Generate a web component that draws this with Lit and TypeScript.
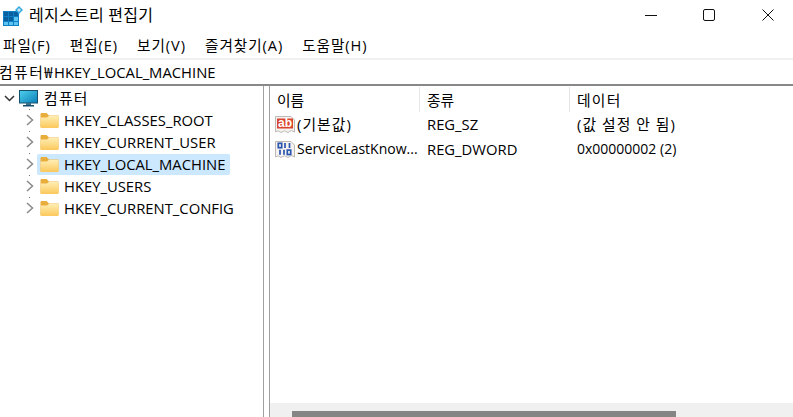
import { LitElement, html, css, svg } from "lit";
import { customElement } from "lit/decorators.js";

const folder = html`<svg class="ficon" width="19" height="15" viewBox="0 0 19 15">
  <defs><linearGradient id="fg" x1="0" y1="0" x2="0" y2="1"><stop offset="0" stop-color="#ffeeb5"/><stop offset="1" stop-color="#fbc85a"/></linearGradient></defs>
  <path d="M0.5 1 Q0.5 0 1.5 0 H6.5 L9 2.5 H18.5 V14 H0.5 Z" fill="#e9ad3c"/>
  <path d="M0.5 4.5 H7 L9 2.8 H18.5 V14.2 Q18.5 15 17.7 15 H1.3 Q0.5 15 0.5 14.2 Z" fill="url(#fg)"/>
</svg>`;

const chevR = html`<svg class="chev" width="8" height="12" viewBox="0 0 8 12"><path d="M1 1 L6.5 6 L1 11" fill="none" stroke="#8a8a8a" stroke-width="1.5"/></svg>`;

const keys = ["HKEY_CLASSES_ROOT", "HKEY_CURRENT_USER", "HKEY_LOCAL_MACHINE", "HKEY_USERS", "HKEY_CURRENT_CONFIG"];

const page = (inner: unknown) => svg`
  <path d="M0.5 1.5 H16 L19.5 5 V17 L16.5 15.5 L13 17.5 L9.5 15.8 L6 17.5 L3 15.8 L0.5 17 Z" fill="#f5f2ef" stroke="#bdb9b6" stroke-width="1"/>
  ${inner}`;

@customElement("app-root")
export class AppRoot extends LitElement {
  static styles = css`
    :host {
      display: flex;
      flex-direction: column;
      width: 793px;
      height: 417px;
      overflow: hidden;
      background: #fff;
      color: #000;
      font-family: "Open Sans", "Noto Sans CJK KR", sans-serif;
      font-size: 14.8px;
      line-height: 20px;
    }
    .title {
      height: 32px;
      display: flex;
      align-items: center;
      flex: none;
    }
    .app-icon { margin-left: 3px; margin-right: 6px; flex: none; }
    .title-text { flex: 1; font-size: 16px; letter-spacing: 0.25px; padding-bottom: 2px; }
    .wbtns { display: flex; margin-right: -4px; }
    .wbtn { width: 58.5px; height: 32px; display: flex; align-items: center; justify-content: center; padding-bottom: 2px; box-sizing: border-box; }
    .menu {
      height: 26px;
      flex: none;
      display: flex;
      align-items: center;
      padding-left: 3px;
      gap: 19px;
      font-size: 14.6px;
      letter-spacing: 0.95px;
      white-space: nowrap;
    }
    .addr {
      height: 24px;
      flex: none;
      border-top: 2px solid #f0f0f0;
      border-bottom: 2px solid #888;
      display: flex;
      align-items: center;
      font-size: 14.8px;
      white-space: nowrap;
    }
    .addr .crumb { letter-spacing: 1.5px; margin-left: -1px; }
    .body { flex: 1; display: flex; min-height: 0; }
    .tree { width: 263px; flex: none; padding-top: 1px; }
    .row { position: relative; height: 22px; display: flex; align-items: center; white-space: nowrap; }
    .root { padding-left: 4px; }
    .root .down { margin-right: 4px; flex: none; }
    .root .pc { margin-right: 6px; flex: none; }
    .root .label { letter-spacing: 1.3px; }
    .child { padding-left: 26px; }
    .child::before {
      content: "";
      position: absolute;
      left: 29px;
      top: 0;
      width: 1px;
      height: 1px;
      background: #777;
    }
    .chev { flex: none; margin-right: 3px; }
    .item {
      display: flex;
      align-items: center;
      height: 21px;
      padding: 0 3px 0 3px;
      border-radius: 2px;
    }
    .item.sel { background: #cce8ff; padding-right: 5px; }
    .ficon { flex: none; margin-right: 5px; }
    .split {
      width: 7px;
      flex: none;
      border-left: 1px solid #a0a0a0;
      border-right: 1px solid #a0a0a0;
      box-sizing: border-box;
    }
    .list { flex: 1; min-width: 0; display: flex; flex-direction: column; }
    .rows { flex: 1; }
    .grid { display: grid; grid-template-columns: 150px 150px 1fr; }
    .head { height: 25px; align-items: start; }
    .head div { height: 25px; display: flex; align-items: center; padding-left: 7px; border-right: 1px solid #e5e5e5; box-sizing: border-box; margin-top: 1px; }
    .head div:last-child { border-right: none; }
    .head .wide { letter-spacing: 1.2px; }
    .line { height: 25px; align-items: center; white-space: nowrap; }
    .line div { padding-left: 7px; }
    .line .name { display: flex; align-items: center; padding-left: 5px; gap: 2px; }
    .narrow { font-size: 14px; }
    .ko { letter-spacing: 1.05px; }
    .hbar { height: 14px; flex: none; background: #f0f0f0; display: flex; align-items: flex-end; padding-left: 22px; }
    .thumb { width: 384px; height: 6px; background: #858585; }
  `;

  render() {
    return html`
      <div class="title">
        <svg class="app-icon" width="20" height="20" viewBox="0 0 20 20">
          <rect x="0" y="5" width="16" height="15" fill="#0f7fc4"/>
          <g fill="#5cc4f0">
            <rect x="11" y="11" width="4" height="4"/><rect x="1" y="16" width="4" height="3"/>
            <rect x="6" y="16" width="4" height="3"/><rect x="11" y="16" width="4" height="3"/>
          </g>
          <g fill="#0a5f9e">
            <rect x="1" y="6" width="4" height="4"/><rect x="6" y="6" width="4" height="4"/>
            <rect x="1" y="11" width="4" height="4"/><rect x="6" y="11" width="4" height="4"/>
            <rect x="11" y="6" width="4" height="4"/>
          </g>
          <path d="M16 0 L20 4 L16 8 L12 4 Z" fill="#36a9e1"/>
          <path d="M16 2 L18 4 L16 6 L14 4 Z" fill="#bfe6f8"/>
        </svg>
        <div class="title-text">레지스트리 편집기</div>
        <div class="wbtns">
          <div class="wbtn"><svg width="12" height="12" viewBox="0 0 12 12"><path d="M0 6.5 H12" stroke="#111" stroke-width="1"/></svg></div>
          <div class="wbtn"><svg width="12" height="12" viewBox="0 0 12 12"><rect x="0.5" y="0.5" width="11" height="11" rx="1.5" fill="none" stroke="#111"/></svg></div>
          <div class="wbtn"><svg width="12" height="12" viewBox="0 0 12 12"><path d="M0.5 0.5 L11.5 11.5 M11.5 0.5 L0.5 11.5" stroke="#111" stroke-width="1"/></svg></div>
        </div>
      </div>
      <div class="menu">
        <span>파일(F)</span><span>편집(E)</span><span>보기(V)</span><span>즐겨찾기(A)</span><span>도움말(H)</span>
      </div>
      <div class="addr"><span class="crumb">컴퓨터₩</span><span>HKEY_LOCAL_MACHINE</span></div>
      <div class="body">
        <div class="tree">
          <div class="row root">
            <svg class="down" width="11" height="7" viewBox="0 0 11 7"><path d="M1 1 L5.5 5.5 L10 1" fill="none" stroke="#333" stroke-width="1.5"/></svg>
            <svg class="pc" width="19" height="17" viewBox="0 0 19 17">
              <defs><linearGradient id="sc" x1="0" y1="0" x2="1" y2="1"><stop offset="0" stop-color="#4fd0ec"/><stop offset="1" stop-color="#0b7fb8"/></linearGradient></defs>
              <rect x="0.5" y="0.5" width="18" height="12.5" fill="url(#sc)" stroke="#14506e"/>
              <rect x="7" y="13" width="5" height="2" fill="#3c6f88"/>
              <rect x="4" y="15" width="11" height="1.5" fill="#14506e"/>
            </svg>
            <span class="label">컴퓨터</span>
          </div>
          ${keys.map(
            (k) => html`<div class="row child">
              ${chevR}
              <div class="item ${k === "HKEY_LOCAL_MACHINE" ? "sel" : ""}">${folder}<span>${k}</span></div>
            </div>`
          )}
        </div>
        <div class="split"></div>
        <div class="list">
          <div class="rows">
            <div class="grid head"><div>이름</div><div>종류</div><div class="wide">데이터</div></div>
            <div class="grid line">
              <div class="name">
                <svg width="20" height="18" viewBox="0 0 20 18">${page(svg`<rect x="2" y="3.5" width="16" height="10" fill="#d9452e"/><text x="10" y="12" font-size="12" font-weight="700" text-anchor="middle" fill="#fff" font-family="Liberation Sans">ab</text>`)}</svg>
                <span class="ko">(기본값)</span>
              </div>
              <div>REG_SZ</div><div class="ko">(값 설정 안 됨)</div>
            </div>
            <div class="grid line">
              <div class="name">
                <svg width="20" height="18" viewBox="0 0 20 18">${page(svg`<g fill="none" stroke="#2a56b0" stroke-width="1.7"><rect x="3.3" y="3.3" width="3.4" height="4.4"/><path d="M10 3 V8"/><path d="M14.5 3 V8"/><path d="M5 9.8 V14.8"/><path d="M9 9.8 V14.8"/><rect x="12.3" y="10.1" width="3.4" height="4.4"/></g>`)}</svg>
                <span class="narrow">ServiceLastKnow...</span>
              </div>
              <div>REG_DWORD</div><div class="narrow">0x00000002 (2)</div>
            </div>
          </div>
          <div class="hbar"><div class="thumb"></div></div>
        </div>
      </div>
    `;
  }
}
